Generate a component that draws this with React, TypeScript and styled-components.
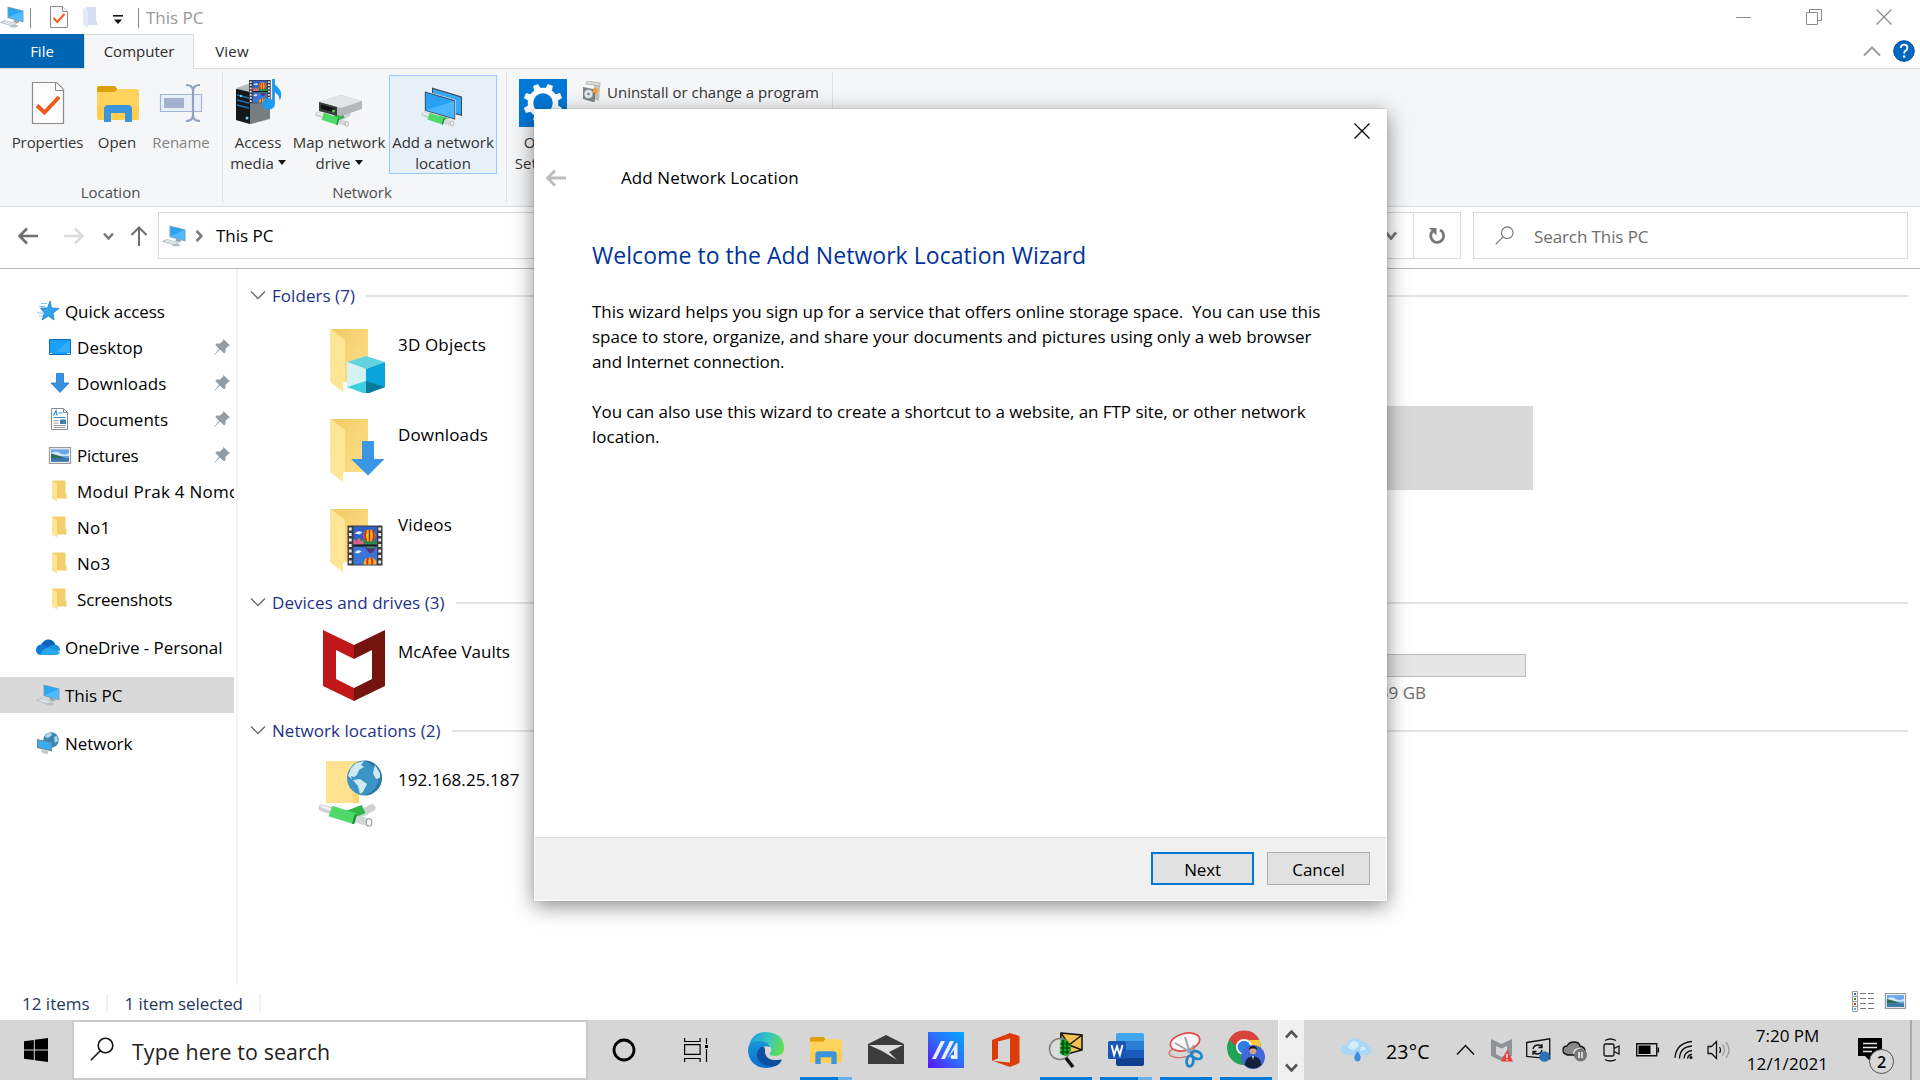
import React from "react";
import styled, { createGlobalStyle } from "styled-components";

const Global = createGlobalStyle`
  *, *::before, *::after { box-sizing: border-box; }
  html, body { margin: 0; padding: 0; background: #fff; overflow: hidden; }
  svg { display: block; flex: none; }
`;

const Screen = styled.div`
  position: relative;
  width: 1920px;
  height: 1080px;
  overflow: hidden;
  display: flex;
  flex-direction: column;
  background: #fff;
  color: #000;
  font-family: "Open Sans", "Noto Sans", sans-serif;
  font-size: 17px;
`;

const Txt = styled.span<{ $ls?: number; $size?: number; $color?: string }>`
  white-space: pre;
  letter-spacing: ${(p) => p.$ls ?? 0}px;
  font-size: ${(p) => (p.$size ? `${p.$size}px` : "inherit")};
  color: ${(p) => p.$color ?? "inherit"};
`;

/* ---------- title bar ---------- */
const TitleBar = styled.header`
  height: 34px;
  display: flex;
  align-items: center;
  flex: none;
`;
const QuickTools = styled.div`
  display: flex;
  align-items: center;
  flex: 1;
`;
const ToolSep = styled.i<{ $l: number; $r: number }>`
  width: 1px;
  height: 20px;
  margin: 2px ${(p) => p.$r}px 0 ${(p) => p.$l}px;
  background: #8a8a8a;
`;
const Gap = styled.i<{ $w: number }>`
  width: ${(p) => p.$w}px;
  flex: none;
`;
const ToolMenu = styled.div`
  padding-top: 6px;
`;
const Controls = styled.div`
  display: flex;
  padding-right: 1px;
`;
const ControlButton = styled.div`
  width: 70px;
  display: flex;
  justify-content: center;
`;

/* ---------- tabs ---------- */
const Tabs = styled.nav`
  height: 35px;
  display: flex;
  flex: none;
  font-size: 15px;
  border-bottom: 1px solid #dadbdc;
`;
const Tab = styled.div<{ $w: number; $kind?: "file" | "active" }>`
  width: ${(p) => p.$w}px;
  height: ${(p) => (p.$kind === "active" ? 35 : 34)}px;
  display: flex;
  align-items: center;
  justify-content: center;
  padding-bottom: ${(p) => (p.$kind === "active" ? 3 : 1)}px;
  color: ${(p) => (p.$kind === "file" ? "#fff" : "#2b2b2b")};
  background: ${(p) => (p.$kind === "file" ? "#0066b4" : p.$kind === "active" ? "#f5f6f7" : "transparent")};
  border: ${(p) => (p.$kind === "active" ? "1px solid #dadbdc" : "0")};
  border-bottom: 0;
`;
const TabTools = styled.div`
  margin-left: auto;
  display: flex;
  align-items: center;
  gap: 12px;
  padding-right: 5px;
`;

/* ---------- ribbon ---------- */
const Ribbon = styled.section`
  height: 138px;
  flex: none;
  display: flex;
  background: #f5f6f7;
  border-bottom: 1px solid #dadbdc;
  font-size: 15px;
`;
const Group = styled.div<{ $w: number; $pad: number }>`
  width: ${(p) => p.$w}px;
  padding: 6px 0 0 ${(p) => p.$pad}px;
  position: relative;
  display: flex;
  flex-direction: column;
  &::after {
    content: "";
    position: absolute;
    right: 0;
    top: 3px;
    bottom: 3px;
    width: 1px;
    background: #dfe0e2;
  }
`;
const GroupRow = styled.div`
  display: flex;
  height: 99px;
`;
const GroupName = styled.div<{ $shift?: number }>`
  height: 32px;
  display: flex;
  align-items: center;
  justify-content: center;
  padding-top: 3px;
  padding-right: ${(p) => p.$shift ?? 0}px;
  color: #4c4c4c;
`;
const BigButton = styled.div<{ $w: number; $on?: boolean; $dim?: boolean }>`
  width: ${(p) => p.$w}px;
  height: 99px;
  display: flex;
  flex-direction: column;
  align-items: center;
  color: ${(p) => (p.$dim ? "#838383" : "#333")};
  line-height: 21px;
  padding-top: ${(p) => (p.$on ? 3 : 4)}px;
  border: ${(p) => (p.$on ? "1px solid #99c9f7" : "0")};
  background: ${(p) => (p.$on ? "#e7eff8" : "transparent")};
  svg { margin-bottom: 5px; }
`;
const CaretLine = styled.div`
  display: flex;
  align-items: center;
  gap: 4px;
`;
const Caret = styled.i`
  border: 4px solid transparent;
  border-top: 5px solid #111;
  border-bottom: 0;
  margin-top: -3px;
`;
const SmallButton = styled.div`
  display: flex;
  align-items: center;
  height: 34px;
  gap: 6px;
  padding-left: 8px;
  color: #333;
`;

/* ---------- address ---------- */
const AddressRow = styled.section`
  height: 62px;
  flex: none;
  display: flex;
  padding: 5px 12px 9px 0;
  border-bottom: 1px solid #b9b9b9;
`;
const NavButtons = styled.div`
  width: 158px;
  display: flex;
  align-items: center;
  padding-left: 18px;
`;
const AddressBox = styled.div`
  width: 1303px;
  height: 47px;
  border: 1px solid #d9d9d9;
  display: flex;
  align-items: center;
`;
const Crumb = styled.div`
  flex: 1;
  display: flex;
  align-items: center;
  padding-left: 3px;
`;
const RefreshBox = styled.div`
  width: 47px;
  height: 45px;
  border-left: 1px solid #d9d9d9;
  display: flex;
  align-items: center;
  justify-content: center;
`;
const SearchBox = styled.div`
  margin-left: 12px;
  flex: 1;
  height: 47px;
  border: 1px solid #d9d9d9;
  display: flex;
  align-items: center;
  gap: 20px;
  padding-left: 21px;
  color: #6d6d6d;
  span { padding-top: 2px; }
`;

/* ---------- body ---------- */
const Body = styled.main`
  height: 716px;
  flex: none;
  display: flex;
`;
const Side = styled.aside`
  width: 238px;
  padding-top: 24px;
  border-right: 2px solid #f5f5f5;
  display: flex;
  flex-direction: column;
`;
const SideRow = styled.div<{ $sub?: boolean; $on?: boolean; $top?: number }>`
  width: 234px;
  height: 36px;
  flex: none;
  margin-top: ${(p) => p.$top ?? 0}px;
  padding-left: ${(p) => (p.$sub ? 48 : 36)}px;
  display: flex;
  align-items: center;
  gap: 5px;
  overflow: hidden;
  background: ${(p) => (p.$on ? "#d9d9d9" : "transparent")};
`;
const PinSlot = styled.div`
  margin-left: auto;
  padding-right: 4px;
`;
const Content = styled.div`
  flex: 1;
  padding: 10px 12px 0 12px;
`;
const Section = styled.div<{ $h: number }>`
  height: ${(p) => p.$h}px;
`;
const Head = styled.div`
  height: 34px;
  display: flex;
  align-items: center;
  color: #1e3287;
  svg { margin-right: 6px; margin-top: -3px; }
  span { padding-bottom: 2px; }
  &::after {
    content: "";
    height: 2px;
    flex: 1;
    margin-left: 11px;
    background: #e3e3e3;
  }
`;
const Tiles = styled.div`
  display: grid;
  grid-template-columns: repeat(3, 403px);
  grid-auto-rows: 84px;
  gap: 6px;
  padding: 3px 0 0 62px;
`;
const Tile = styled.div<{ $on?: boolean; $col?: number }>`
  display: flex;
  grid-column: ${(p) => p.$col ?? 1};
  background: ${(p) => (p.$on ? "#d9d9d9" : "transparent")};
  padding: 5px 0 0 6px;
  gap: 8px;
`;
const TileText = styled.div`
  line-height: 24px;
  padding-top: 12px;
`;
const Drive = styled.div`
  width: 310px;
  margin-left: 80px;
  padding-top: 26px;
  color: #6d6d6d;
`;
const DriveBar = styled.div`
  height: 23px;
  border: 1px solid #bcbcbc;
  background: #e6e6e6;
`;
const DriveInfo = styled.div`
  width: 210px;
  padding-top: 4px;
  text-align: right;
`;

/* ---------- status ---------- */
const Status = styled.footer`
  height: 35px;
  flex: none;
  display: flex;
  align-items: center;
  padding-left: 22px;
  color: #1e395b;
  span { padding-top: 1px; }
`;
const StatusSep = styled.i<{ $l: number; $r: number }>`
  width: 2px;
  height: 18px;
  margin-left: ${(p) => p.$l}px;
  margin-right: ${(p) => p.$r}px;
  background: #f1f1f1;
`;
const ViewIcons = styled.div`
  margin-left: auto;
  display: flex;
  align-items: center;
  gap: 10px;
  padding: 0 13px 3px 0;
`;

/* ---------- taskbar ---------- */
const Taskbar = styled.div`
  height: 60px;
  flex: none;
  display: flex;
  background: #d6d6d6;
`;
const StartButton = styled.div`
  width: 72px;
  display: flex;
  align-items: center;
  justify-content: center;
`;
const TaskSearch = styled.div`
  width: 516px;
  border: 2px solid #cacaca;
  background: #fff;
  display: flex;
  align-items: center;
  padding: 3px 0 0 16px;
  gap: 18px;
  color: #222;
  svg { margin-top: -5px; }
`;
const TaskItem = styled.div<{ $w?: number; $run?: "one" | "many"; $l?: number }>`
  width: ${(p) => p.$w ?? 60}px;
  margin-left: ${(p) => p.$l ?? 0}px;
  height: 60px;
  display: flex;
  align-items: center;
  justify-content: center;
  border-bottom: 3px solid transparent;
  padding-top: 3px;
  border-image: ${(p) =>
    p.$run === "one"
      ? "linear-gradient(90deg, transparent 7px, #0078d7 7px, #0078d7 53px, transparent 53px) 3"
      : p.$run === "many"
      ? "linear-gradient(90deg, transparent 7px, #0078d7 7px, #0078d7 41px, #69afe8 41px, #69afe8 53px, transparent 53px) 3"
      : "none"};
`;
const Scroller = styled.div`
  width: 26px;
  margin-left: 2px;
  border-left: 1px solid #fff;
  background: #f0f0f0;
  display: flex;
  flex-direction: column;
  align-items: center;
  justify-content: space-between;
  padding: 10px 0 8px;
`;
const Weather = styled.div`
  display: flex;
  align-items: center;
  width: 152px;
  padding-left: 37px;
  gap: 13px;
  span { padding-top: 2px; }
`;
const Tray = styled.div`
  display: flex;
  align-items: center;
  width: 276px;
`;
const Clock = styled.div`
  width: 111px;
  display: flex;
  flex-direction: column;
  align-items: center;
  line-height: 28px;
  padding-top: 2px;
`;
const Notice = styled.div`
  position: relative;
  width: 60px;
  margin-left: 9px;
  padding: 17px 0 0 6px;
  border-right: 2px solid #ababab;
  height: 60px;
`;
const NoticeCount = styled.div`
  position: absolute;
  left: 17px;
  top: 29px;
  width: 25px;
  height: 25px;
  border: 1px solid #555;
  border-radius: 50%;
  background: #d9d9d9;
  display: flex;
  align-items: center;
  justify-content: center;
  font-size: 16px;
  font-weight: 600;
`;

/* ---------- dialog ---------- */
const Dialog = styled.section`
  position: absolute;
  left: 534px;
  top: 109px;
  width: 853px;
  height: 792px;
  background: #fff;
  box-shadow: 0 5px 20px rgba(0, 0, 0, 0.46), 0 0 1px rgba(0, 0, 0, 0.3);
  display: flex;
  flex-direction: column;
`;
const DialogTop = styled.div`
  height: 44px;
  display: flex;
  align-items: center;
  justify-content: flex-end;
  padding-right: 17px;
`;
const DialogTitle = styled.div`
  height: 50px;
  display: flex;
  align-items: center;
  padding: 0 0 1px 12px;
  gap: 55px;
`;
const DialogBody = styled.div`
  flex: 1;
  padding: 34px 0 0 58px;
  line-height: 25px;
`;
const DialogHeading = styled.h1`
  margin: 0 0 26px;
  font-weight: 400;
  font-size: 23px;
  line-height: 36px;
  color: #003399;
`;
const Line = styled.div`
  height: 25px;
`;
const DialogFoot = styled.div`
  height: 63px;
  margin: 0 1px 1px;
  border-top: 1px solid #dfdfdf;
  background: #f0f0f0;
  display: flex;
  justify-content: flex-end;
  gap: 13px;
  padding: 14px 16px 0 0;
`;
const Button = styled.button<{ $primary?: boolean }>`
  width: 103px;
  height: 33px;
  padding: 1px 0 0;
  font-family: inherit;
  font-size: 17px;
  background: #e1e1e1;
  border: ${(p) => (p.$primary ? "2px solid #0078d7" : "1px solid #adadad")};
  color: #000;
  display: flex;
  align-items: center;
  justify-content: center;
`;

/* ---------- drawings ---------- */
const PcIcon = () => (
  <svg width="24" height="22" viewBox="0 0 24 22">
    <path d="M7.500.500 23.500 4.500v12l-16-4.500z" fill="#8aa0ad" />
    <path d="M8.300 1.600 22.600 5.100v10.200L8.300 11.300z" fill="#2aa5f5" />
    <path d="M8.300 11.300 22.600 5.100v10.200z" fill="#4fbaff" />
    <path d="m14 13.500 5 1.600-.4 2.200-5-1.400z" fill="#93a4ad" />
    <path d="m.5 16.500 4-2 12 3-4 2.600z" fill="#c9d2d7" stroke="#9fabb2" strokeWidth=".6" />
    <path d="m3 16.300 11 2.800M5 15.300l10 2.600" stroke="#fff" strokeWidth=".6" />
    <ellipse cx="14" cy="20" rx="4" ry="1.600" fill="#b7c1c7" />
  </svg>
);
const SheetCheck = () => (
  <svg width="18" height="22" viewBox="0 0 18 22">
    <path d="M.5.500h12l5 5v16H.500z" fill="#fcfcfc" stroke="#8c8c8c" />
    <path d="M12.500.500v5h5" fill="#fff" stroke="#8c8c8c" />
    <path d="m3.500 12 3.800 4L14.500 8" fill="none" stroke="#f15a1e" strokeWidth="2" />
  </svg>
);
const PaleFolder = () => (
  <svg width="14" height="21" viewBox="0 0 14 21">
    <path d="M3 0h10v14h1v4H3z" fill="#d3dfef" />
    <path d="m0 0 5 4v17l-5-3z" fill="#e2eaf5" />
  </svg>
);
const PropertiesIcon = () => (
  <svg width="48" height="48" viewBox="0 0 48 48">
    <g transform="translate(7.500 2.500)">
      <path d="M1 1h24l7 7v34H1z" fill="#fcfcfc" stroke="#8c8c8c" strokeWidth="1.200" />
      <path d="M24 1v8h8" fill="#fff" stroke="#8c8c8c" />
      <path d="m5.500 24 7.500 7L27.500 15.500" fill="none" stroke="#f15a1e" strokeWidth="4" />
    </g>
  </svg>
);
const ExplorerShape = () => (
  <g>
    <path d="M0 2q0-2 2-2h16l3 4-3 3H0z" fill="#e09f08" />
    <path d="M0 6h17l4-3h19q2 0 2 2v27q0 2-2 2H2q-2 0-2-2z" fill="#ffd35c" />
    <path d="M0 20v12q0 2 2 2h38q2 0 2-2V20z" fill="#ffcb45" opacity=".6" />
    <path d="M7 36V23q0-4 4-4h20q4 0 4 4v13h-7v-9H14v9z" fill="#3a95dd" />
  </g>
);
const RenameIcon = () => (
  <svg width="48" height="48" viewBox="0 0 48 48">
    <path d="M3.500 15.500h41v17h-41z" fill="#e9f0fa" stroke="#a3b5d4" strokeWidth="1.200" />
    <path d="M7 19h20v10H7z" fill="#a5b1cd" />
    <path d="M29 6q7 0 7 6v24q0 6-7 6M43 6q-7 0-7 6v24q0 6 7 6" fill="none" stroke="#92a3c2" strokeWidth="2.200" />
  </svg>
);
const Film = () => (
  <g>
    <path d="M0 0h35v40H0z" fill="#3c3c3c" />
    <path d="M6 1h23.500v18H6z" fill="#2f5fc8" />
    <path d="M6 21h23.500v18H6z" fill="#3a76d8" />
    <path d="M6 15q6-4 10-1t13.500 1v4H6z" fill="#2d8a4a" />
    <path d="M6 19v-6l3 3 2-4 3 4 2-2v5z" fill="#e0608e" />
    <path d="M7 8q4-4 8-1l-3 2zM7 27q4-4 7-1l-3 2z" fill="#dfe9f8" />
    <ellipse cx="22" cy="10" rx="6" ry="6" fill="#f5c518" />
    <path d="M19 5q-3 5 0 10M25 5q3 5 0 10" stroke="#d62b1f" strokeWidth="2" fill="none" />
    <path d="M22 4v12" stroke="#a3261c" strokeWidth="1.500" />
    <path d="M6 20h23.500" stroke="#222" strokeWidth="2" />
    <path d="M18 21h10q-1 5-5 7-4-2-5-7z" fill="#5b2d7e" />
    <path d="M19 22h8" stroke="#2ea84a" strokeWidth="1.500" />
    <path d="M16 39q0-7 6.500-7t6.500 7z" fill="#f5b518" />
    <path d="M20 39q-1-5 1-6.500M24.500 39q1-5-1-6.500" stroke="#d62b1f" strokeWidth="2" fill="none" />
    <path d="M2.800 2v36M32.200 2v36" stroke="#e8e8e8" strokeWidth="2.800" strokeDasharray="3 2.500" />
  </g>
);
const MediaIcon = () => (
  <svg width="48" height="48" viewBox="0 0 48 48">
    <path d="m2 10 12-4 22 2v32l-19 5-15-4z" fill="#8d9296" />
    <path d="m2 10 14 3v32L2 41z" fill="#15181b" />
    <path d="m16 13 20-5v31l-20 6z" fill="#777c80" />
    <path d="m2 9 12-4 22 3-20 5z" fill="#b9bdc0" />
    <path d="m3 16 12 3M3 21l12 3M3 26l12 3" stroke="#2270b5" strokeWidth="1.300" />
    <circle cx="7" cy="17" r="1.200" fill="#5bd6ff" />
    <circle cx="13" cy="39" r="1.500" fill="#5bd6ff" />
    <g transform="translate(15 1) scale(.62 .58)"><Film /></g>
    <path d="M39.500 0v24" stroke="#1a8fe3" strokeWidth="2.600" />
    <path d="M38.500 0q2 6 6 9 5 5 1 13 1-6-7-10z" fill="#1a9df0" />
    <ellipse cx="34.500" cy="25" rx="6.500" ry="5.500" fill="#1a9df0" />
  </svg>
);
const Pipe = () => (
  <g>
    <path d="m3 6 9 3M30 11l9-5" stroke="#cfd2d4" strokeWidth="5.500" strokeLinecap="round" />
    <path d="m3 5 8 3" stroke="#f1f2f2" strokeWidth="2" strokeLinecap="round" />
    <path d="m27 14 9 3" stroke="#d4d7d9" strokeWidth="6" strokeLinecap="round" />
    <path d="m18 13 15-6" stroke="#2fb548" strokeWidth="7" />
    <path d="m9 8.500 18 6" stroke="#4fd968" strokeWidth="8.500" />
    <path d="m27.500 11-2 7.500" stroke="#178a36" strokeWidth="1.500" />
    <ellipse cx="37" cy="17.300" rx="2" ry="2.900" fill="#fafafa" stroke="#999" strokeWidth=".8" />
  </g>
);
const DriveIcon = () => (
  <svg width="48" height="48" viewBox="0 0 48 48">
    <g transform="translate(0 30) scale(.86)"><Pipe /></g>
    <path d="m4 23 22-7 21 6v8L26 37 4 32z" fill="#b4b6b8" />
    <path d="m4 23 22-7 21 6-21 7z" fill="#e4e5e6" />
    <path d="m4 23 18 5v9L4 32z" fill="#3a3d40" />
    <path d="m6 25.500 14 4v4L6 30z" fill="#111" />
    <circle cx="18.500" cy="32" r="1.500" fill="#3de04c" />
  </svg>
);
const ScreensIcon = () => (
  <svg width="48" height="48" viewBox="0 0 48 48">
    <g transform="translate(2 30) scale(.84)"><Pipe /></g>
    <path d="m13 8.500 30 9V37l-30-8z" fill="#3d4a54" />
    <path d="m14 10 28 8.500v17L14 28z" fill="#35a9f5" />
    <path d="m5.500 12 31 9v20l-31-9z" fill="#3d4a54" stroke="#f5f6f7" strokeWidth=".6" />
    <path d="m6.800 13.800 28.500 8.200v17.300L6.800 31z" fill="#28a0f4" />
    <path d="m6.800 31 28.500-9v17.300z" fill="#49b6ff" />
  </svg>
);
const GearTile = () => (
  <svg width="48" height="48" viewBox="0 0 48 48">
    <path d="M0 0h48v48H0z" fill="#0078d7" />
    <circle cx="24" cy="24" r="12.500" fill="none" stroke="#fff" strokeWidth="5.500" />
    {[22.5, 67.5, 112.5, 157.5, 202.5, 247.5, 292.5, 337.5].map((a) => (
      <path key={a} d="m20.500 10 .8-5.500h5.400l.8 5.500z" fill="#fff" transform={`rotate(${a} 24 24)`} />
    ))}
  </svg>
);
const ProgramIcon = () => (
  <svg width="18" height="22" viewBox="0 0 18 22">
    <path d="m4 0 13 2v4l-1 14-5-2V4L3 3z" fill="#c3c3bd" />
    <path d="m4 0 13 2v3L3 3z" fill="#dcdcd8" stroke="#999" strokeWidth=".5" />
    <circle cx="12" cy="10" r="3" fill="#f2a03c" />
    <path d="m0 6 10 2v13L0 18z" fill="#7b8487" />
    <circle cx="5.500" cy="13" r="4.500" fill="#dfe8ea" stroke="#899" strokeWidth=".6" />
    <circle cx="5.500" cy="13" r="1.200" fill="#6a7a7a" />
    <path d="M11 12v9" stroke="#222" />
  </svg>
);
const arrowTurn = { left: undefined, right: "rotate(180 10 10)", up: "rotate(90 10 10)" };
const ArrowIcon = ({ dir, color, w = 2.6 }: { dir: "left" | "right" | "up"; color: string; w?: number }) => (
  <svg width="20" height="20" viewBox="0 0 20 20">
    <g transform={arrowTurn[dir]} fill="none" stroke={color} strokeWidth={w}>
      <path d="M1.500 10H20M9 2.500 1.500 10 9 17.500" />
    </g>
  </svg>
);
const chevronPath = {
  down: (w: number, h: number) => `M1 1.5 ${w / 2} ${h - 1.5} ${w - 1} 1.5`,
  up: (w: number, h: number) => `M1 ${h - 1.5} ${w / 2} 1.5 ${w - 1} ${h - 1.5}`,
  right: (w: number, h: number) => `M1.5 1 ${w - 1.5} ${h / 2} 1.5 ${h - 1}`,
};
const Chevron = ({ w, h, color, sw = 1.5, dir = "down" }: { w: number; h: number; color: string; sw?: number; dir?: "down" | "up" | "right" }) => (
  <svg width={w} height={h} viewBox={`0 0 ${w} ${h}`}>
    <path d={chevronPath[dir](w, h)} fill="none" stroke={color} strokeWidth={sw} />
  </svg>
);
const Glass = ({ s, color, sw }: { s: number; color: string; sw: number }) => (
  <svg width={s} height={s} viewBox="0 0 24 24">
    <circle cx="15.500" cy="8.500" r="7.300" fill="none" stroke={color} strokeWidth={sw} />
    <path d="M10.300 13.700.8 23.200" stroke={color} strokeWidth={sw} />
  </svg>
);
const Cross = ({ color }: { color: string }) => (
  <svg width="16" height="16" viewBox="0 0 16 16">
    <path d="m.5.500 15 15M15.500.500l-15 15" stroke={color} strokeWidth="1.200" />
  </svg>
);
const PinIcon = () => (
  <svg width="16" height="17" viewBox="0 0 16 17">
    <path d="m9.500 0 6.500 6.500-2 .8-2.500 2.600V13l-1.500 1.500-4-3.900L.5 16l-.3-.3 4.900-5.900L1.300 6 2.500 4.500H6L8.800 2z" fill="#929ca5" />
  </svg>
);
const StarIcon = () => (
  <svg width="24" height="20" viewBox="0 0 24 20">
    <path d="m14 0 1.500 7 7.500.5-6 4.500 1 7-5.500-4-6.500 4 2.500-7-4-5h7z" fill="#2fa2ea" stroke="#1c7fc4" strokeWidth=".8" />
    <path d="M5 2.500h6M3 5.500h6M1 12h7M3 15h4" stroke="#7cc7f4" strokeWidth="1" />
  </svg>
);
const DesktopIcon = () => (
  <svg width="24" height="18" viewBox="0 0 24 18">
    <path d="M1.500 1.500h21v15h-21z" fill="#1aa0fb" stroke="#0a6cbd" />
    <path d="M22 2v12H8z" fill="#44b4ff" opacity=".6" />
    <path d="M2 15.500h2M19 15.500h3" stroke="#fff" />
  </svg>
);
const DownIcon = () => (
  <svg width="24" height="20" viewBox="0 0 24 20">
    <path d="M8.500.500h7v9.500H21l-9 9.500L3 10h5.500z" fill="#3792e3" stroke="#2a78c2" strokeWidth=".8" />
  </svg>
);
const DocIcon = () => (
  <svg width="24" height="22" viewBox="0 0 24 22">
    <path d="M3.500.500h12l4 4v17h-16z" fill="#fff" stroke="#8a8a8a" />
    <path d="M15.500.500v4h4" fill="none" stroke="#8a8a8a" />
    <path d="m5.500 7.500 2.500-5 1 5M10.500 5h4M5.500 9.500h12" stroke="#2a8ad4" strokeWidth="1.200" fill="none" />
    <path d="M5.500 12.500h5M5.500 15h5M5.500 17.500h12M5.500 19.500h12" stroke="#9a9a9a" />
    <path d="M12 11.500h6v4.500h-6z" fill="#3f7fae" />
  </svg>
);
const PictureIcon = ({ w = 24, h = 17 }: { w?: number; h?: number }) => (
  <svg width={w} height={h} viewBox="0 0 24 17" preserveAspectRatio="none">
    <path d="M1.500.700h21v15.600h-21z" fill="#fff" stroke="#9b9b9b" strokeWidth="1.300" />
    <path d="M3 2.300h18v12.400H3z" fill="#6aa5ea" />
    <path d="M3 6q5-3 9 0t9 0v3H3z" fill="#cfe6fa" />
    <path d="M3 6.500Q10 8 17 11H3z" fill="#2f6a52" />
    <path d="M3 11h18v3.700H3z" fill="#3c76a5" />
  </svg>
);
const FolderIcon = () => (
  <svg width="24" height="22" viewBox="0 0 24 22">
    <path d="M5 .500h12.500v12.500l1 1V18.500H5z" fill="#f3cf6c" />
    <path d="m4 .500 5 3.500v17.500l-5-3z" fill="#ffe394" />
  </svg>
);
const CloudDrive = () => (
  <svg width="24" height="17" viewBox="0 0 24 17">
    <path d="M5 6Q8 0 13 .500q5 .500 6.500 5.500L12 12z" fill="#0a64b8" />
    <path d="M5.500 5.500Q8 5 12 8l-6 8Q0 16 0 11q0-5 5.500-5.500z" fill="#0a78d6" />
    <path d="M12 8q3-3 7-2.500 5 .800 5 6l-12 2z" fill="#1790e0" />
    <path d="M4 16q2-6 8-7.500L24 13q-1 3-4 3H5z" fill="#28a8ea" />
  </svg>
);
const NetIcon = () => (
  <svg width="24" height="23" viewBox="0 0 24 23">
    <circle cx="15" cy="8" r="7.800" fill="#3d86b4" />
    <path d="M9 4q3-4 6-3l1 2-4 3-3-1zM18 5l3-1 1 5-3 2z" fill="#b5d6e4" />
    <path d="m1 7 15 3.500v9L1 16z" fill="#6b8796" />
    <path d="m2 8.300 13 3V18.200L2 15z" fill="#35adf7" />
    <path d="m6 17.500 6 1.500v3l-5-.500-2-2z" fill="#c1cbd0" />
  </svg>
);
const BigFolder = ({ kind }: { kind: "cube" | "down" | "film" }) => (
  <svg width="72" height="72" viewBox="0 0 72 72">
    <defs>
      <linearGradient id="flap" x1="0" y1="0" x2="1" y2="1">
        <stop offset="0" stopColor="#f0cb66" />
        <stop offset="1" stopColor="#ffe08a" />
      </linearGradient>
    </defs>
    <path d="M12.500 8H50v53H12.500z" fill="url(#flap)" />
    <path d="m13 8 14 11v42l-2 1v9l-12-9z" fill="#ffe596" />
    {kind === "cube" && (
      <g>
        <path d="m29 41 19-6 19 6-19 7z" fill="#63d3e0" />
        <path d="m29 41 19 7v25l-19-7z" fill="#d2f2f3" />
        <path d="m48 48 19-7v25l-19 7z" fill="#0aa5dc" />
        <path d="m29 66 19-6v13z" fill="#3dd0dc" />
        <path d="m48 60 19 6-19 7z" fill="#087a9c" />
      </g>
    )}
    {kind === "down" && <path d="M44 30h12v18h10.500L50 64.500 33 48h11z" fill="#3b97e6" />}
    {kind === "film" && <g transform="translate(29.500 24.500)"><Film /></g>}
  </svg>
);
const McAfeeBig = () => (
  <svg width="72" height="78" viewBox="0 0 72 78">
    <path d="m5 2 31 15v14L18 22v29l18 9v13L5 58z" fill="#c01818" />
    <path d="M67 2 36 17v14l18-9v29l-18 9v13l31-15z" fill="#74140f" />
  </svg>
);
const NetFolder = () => (
  <svg width="72" height="76" viewBox="0 0 72 76">
    <path d="M8 5h30v42H8z" fill="#ffe190" />
    <path d="M35 5h6v42h-6z" fill="#fcd770" />
    <circle cx="46.500" cy="22" r="17.500" fill="#3c94c6" />
    <path d="M46.500 4.500a17.500 17.500 0 0 1 0 35q14-6 14-17t-14-18z" fill="#235f86" opacity=".55" />
    <path d="m33 12 5-5 8-2-3 4 3 2-5 3-2 5-3 2-3-1 1 3-4-3zM35 24l7-1 7 5-4 8-3 2-2-8zM57 9l5 8v5l-4 1-3-6z" fill="#cfe9f1" />
    <g transform="translate(0 44) scale(1.380 1.300)"><Pipe /></g>
  </svg>
);

const taskIcons = {
  ring: (
    <svg width="24" height="24" viewBox="0 0 24 24">
      <circle cx="12" cy="12" r="10" fill="none" stroke="#000" strokeWidth="2.800" />
    </svg>
  ),
  view: (
    <svg width="24" height="24" viewBox="0 0 24 24" fill="none" stroke="#000" strokeWidth="1.200">
      <path d="M.6 6.600h15.500v9.800H.6zM.6 0v3.500h15.500V0M.6 24v-3.500h15.500V24M22.500 0v6M22.500 11v13" />
      <path d="M21 7h3v3h-3z" fill="#000" stroke="none" />
    </svg>
  ),
  edge: (
    <svg width="36" height="36" viewBox="0 0 36 36">
      <defs>
        <linearGradient id="eg" x1="0" y1=".3" x2="1" y2=".5">
          <stop offset="0" stopColor="#1d9fe0" />
          <stop offset=".5" stopColor="#35c4c4" />
          <stop offset="1" stopColor="#62e04e" />
        </linearGradient>
        <linearGradient id="eb" x1="0" y1="0" x2="0" y2="1">
          <stop offset="0" stopColor="#1996d8" />
          <stop offset="1" stopColor="#0a6fd0" />
        </linearGradient>
      </defs>
      <path d="M1 14Q4 0 18 0q18 1 18 16 0 8-9 8-6 0-5-3 2-2 1-5-2-5-9-5-7-1-13 3z" fill="url(#eg)" />
      <path d="M0 18q0-9 11-9 9 0 11 6-9-3-9 7 1 13 14 12-4 2-9 2Q1 35 0 18z" fill="url(#eb)" />
      <path d="M13 15q-7 7-2 14 6 7 17 5 4-2 6-6-2-1-4 0-14 1-13-11-1-3-4-2z" fill="#0f4f9e" />
    </svg>
  ),
  files: (
    <svg width="32" height="27" viewBox="0 0 42 36" preserveAspectRatio="none"><ExplorerShape /></svg>
  ),
  mail: (
    <svg width="36" height="30" viewBox="0 0 36 30">
      <path d="M0 9 18 0l18 9v20H0z" fill="#3c3c3c" />
      <path d="M1 10h34L21 17l8 8-15-9z" fill="#dcdcdc" />
    </svg>
  ),
  asus: (
    <svg width="36" height="36" viewBox="0 0 36 36">
      <defs>
        <linearGradient id="as" x1="0" y1="1" x2="1" y2="0">
          <stop offset="0" stopColor="#5a14f5" />
          <stop offset=".5" stopColor="#2f6cfb" />
          <stop offset="1" stopColor="#00a8ff" />
        </linearGradient>
      </defs>
      <path d="M0 0h36v36H0z" fill="url(#as)" />
      <path d="M4 27 13 9h4L8 27zM13 27l9-18h4l-9 18zM19 27l9-16h1.500v16H26v-9z" fill="#e9eeff" />
      <circle cx="24.500" cy="25" r="2" fill="#fff" />
    </svg>
  ),
  office: (
    <svg width="28" height="34" viewBox="0 0 28 34">
      <path d="M0 7 18 0l9.500 3v27L18 34 1 28l17 1.500V5.500L6 8.500v17L0 28z" fill="#dc3c08" />
    </svg>
  ),
  finder: (
    <svg width="36" height="36" viewBox="0 0 36 36">
      <path d="m13 1 21 2v15l-18 5-4-2z" fill="#f2c14e" stroke="#111" strokeWidth="1.500" />
      <path d="m13 1 8 12L34 3M21 13l13 5" fill="none" stroke="#111" strokeWidth="1.500" />
      <circle cx="12" cy="17" r="10.500" fill="#d8dedb" fillOpacity=".85" stroke="#7d7d7d" strokeWidth="1.500" />
      <path d="M13 7q10 1 9.500 10-1 6-5 7l-5-2z" fill="#0ca81c" />
      <path d="M12 12h10M12 16h10M12 20h9M15 8v15M19 9v13" stroke="#033a08" strokeWidth="1.200" />
      <path d="m18 26 7 9" stroke="#111" strokeWidth="3.500" />
    </svg>
  ),
  word: (
    <svg width="36" height="34" viewBox="0 0 36 34">
      <path d="M8 2q0-2 2-2h24q2 0 2 2v6H8z" fill="#41a5ee" />
      <path d="M8 8h28v9H8z" fill="#2b7cd3" />
      <path d="M8 17h28v8H8z" fill="#185abd" />
      <path d="M8 25h28v6q0 2-2 2H10q-2 0-2-2z" fill="#103f91" />
      <rect x="0" y="8" width="18" height="18" rx="1.500" fill="#1a55b5" />
      <path d="m3.500 12 2.600 10L9 13.500 11.900 22l2.600-10" fill="none" stroke="#fff" strokeWidth="1.900" />
    </svg>
  ),
  snip: (
    <svg width="36" height="36" viewBox="0 0 36 36">
      <ellipse cx="14" cy="20" rx="13" ry="5.500" fill="none" stroke="#e07070" strokeWidth="1.300" transform="rotate(-6 14 20)" />
      <ellipse cx="17" cy="10" rx="15" ry="8.500" fill="#fbf6f6" stroke="#e34a4a" strokeWidth="1.700" transform="rotate(-14 17 10)" />
      <path d="m17 5 5 16M7 11l17 10M26 13l-6 8" stroke="#9aa4ab" strokeWidth="2" />
      <ellipse cx="28.500" cy="23" rx="5.500" ry="3.500" transform="rotate(25 28.500 23)" fill="none" stroke="#1f86cf" strokeWidth="2.800" />
      <ellipse cx="22" cy="29" rx="3.300" ry="5.500" transform="rotate(8 22 29)" fill="none" stroke="#1f86cf" strokeWidth="2.800" />
    </svg>
  ),
  chrome: (
    <svg width="40" height="40" viewBox="0 0 40 40">
      <circle cx="18" cy="18" r="17" fill="#1fa255" />
      <path d="M3 10A17 17 0 0 1 33.500 10H18q-6 1-7.500 6z" fill="#d8443b" />
      <path d="M33.500 10Q37 20 30 30L18 35l8-17-3-8z" fill="#fcc934" />
      <circle cx="18" cy="17" r="8" fill="#fff" />
      <circle cx="18" cy="17" r="6.300" fill="#2f7de9" />
      <circle cx="27" cy="27" r="12" fill="#4268d8" />
      <path d="M18.500 35q1-8 8.500-9 8 1 8.500 9-8 7-17 0z" fill="#14203a" />
      <circle cx="27" cy="21" r="3.300" fill="#d3a48b" />
      <path d="M23 20q0-4 4-4t4 4l-2-1.500h-4z" fill="#1d1512" />
      <path d="m26 26 1 4 1-4z" fill="#d5dcea" />
    </svg>
  ),
};

const places: { name: string; icon: React.ReactNode; pin?: boolean; ls?: number }[] = [
  { name: "Desktop", icon: <DesktopIcon />, pin: true, ls: 0.06 },
  { name: "Downloads", icon: <DownIcon />, pin: true, ls: 0.08 },
  { name: "Documents", icon: <DocIcon />, pin: true },
  { name: "Pictures", icon: <PictureIcon />, pin: true, ls: -0.3 },
  { name: "Modul Prak 4 Nomor", icon: <FolderIcon />, ls: 0.25 },
  { name: "No1", icon: <FolderIcon />, ls: 0.2 },
  { name: "No3", icon: <FolderIcon />, ls: 0.2 },
  { name: "Screenshots", icon: <FolderIcon />, ls: -0.15 },
];

export default function App() {
  return (
    <Screen>
      <Global />
      <TitleBar>
        <QuickTools>
          <PcIcon />
          <ToolSep $l={6} $r={19} />
          <SheetCheck />
          <Gap $w={15} />
          <PaleFolder />
          <Gap $w={16} />
          <ToolMenu>
            <svg width="10" height="10" viewBox="0 0 10 10">
              <path d="M0 .800h10" stroke="#111" strokeWidth="1.600" />
              <path d="M1 4.500h8L5 9z" fill="#111" />
            </svg>
          </ToolMenu>
          <ToolSep $l={15} $r={7} />
          <Txt $color="#999">This PC</Txt>
        </QuickTools>
        <Controls>
          <ControlButton>
            <svg width="16" height="16"><path d="M0 8.500h15" stroke="#8a8a8a" /></svg>
          </ControlButton>
          <ControlButton>
            <svg width="16" height="16" fill="none" stroke="#8a8a8a"><path d="M.5 3.500h11v12H.500zM3.500 3.500v-3h12v11h-4" /></svg>
          </ControlButton>
          <ControlButton><Cross color="#8a8a8a" /></ControlButton>
        </Controls>
      </TitleBar>
      <Tabs>
        <Tab $w={84} $kind="file"><Txt>File</Txt></Tab>
        <Tab $w={110} $kind="active"><Txt>Computer</Txt></Tab>
        <Tab $w={76}><Txt $ls={0.2}>View</Txt></Tab>
        <TabTools>
          <Chevron w={18} h={11} color="#9b9b9b" sw={2} dir="up" />
          <svg width="22" height="22" viewBox="0 0 22 22">
            <circle cx="11" cy="11" r="10.300" fill="#0067c5" stroke="#0b4a86" />
            <path d="M7.800 8q0-3.300 3.300-3.300t3.300 3q0 1.800-1.600 2.800-1.700 1-1.700 3" fill="none" stroke="#fff" strokeWidth="1.800" />
            <circle cx="11.100" cy="16.500" r="1.200" fill="#fff" />
          </svg>
        </TabTools>
      </Tabs>
      <Ribbon>
        <Group $w={223} $pad={8}>
          <GroupRow>
            <BigButton $w={79}><PropertiesIcon /><Txt $ls={-0.1}>Properties</Txt></BigButton>
            <BigButton $w={60}>
              <svg width="48" height="48" viewBox="0 0 48 48"><g transform="translate(4 7)"><ExplorerShape /></g></svg>
              <Txt>Open</Txt>
            </BigButton>
            <BigButton $w={68} $dim><RenameIcon /><Txt>Rename</Txt></BigButton>
          </GroupRow>
          <GroupName $shift={10}><Txt>Location</Txt></GroupName>
        </Group>
        <Group $w={284} $pad={4}>
          <GroupRow>
            <BigButton $w={62}>
              <MediaIcon /><Txt>Access</Txt>
              <CaretLine><Txt>media</Txt><Caret /></CaretLine>
            </BigButton>
            <BigButton $w={100}>
              <DriveIcon /><Txt>Map network</Txt>
              <CaretLine><Txt>drive</Txt><Caret /></CaretLine>
            </BigButton>
            <BigButton $w={108} $on><ScreensIcon /><Txt>Add a network</Txt><Txt>location</Txt></BigButton>
          </GroupRow>
          <GroupName $shift={10}><Txt>Network</Txt></GroupName>
        </Group>
        <Group $w={326} $pad={4}>
          <GroupRow>
            <BigButton $w={64}><GearTile /><Txt>Open</Txt><Txt $ls={0.1}>Settings</Txt></BigButton>
            <SmallButton><ProgramIcon /><Txt>Uninstall or change a program</Txt></SmallButton>
          </GroupRow>
        </Group>
      </Ribbon>
      <AddressRow>
        <NavButtons>
          <ArrowIcon dir="left" color="#6e6e6e" /><Gap $w={26} />
          <ArrowIcon dir="right" color="#dcdcdc" /><Gap $w={19} />
          <Chevron w={11} h={8} color="#7a7a7a" sw={2.6} /><Gap $w={15} />
          <ArrowIcon dir="up" color="#6e6e6e" w={2} />
        </NavButtons>
        <AddressBox>
          <Crumb>
            <PcIcon /><Gap $w={9} />
            <Chevron w={8} h={12} color="#7a7a7a" sw={2.6} dir="right" /><Gap $w={13} />
            <Txt>This PC</Txt>
          </Crumb>
          <Chevron w={12} h={9} color="#7a7a7a" sw={2.8} /><Gap $w={16} />
          <RefreshBox>
            <svg width="18" height="18" viewBox="0 0 18 18">
              <path d="M5.500 3.500A6.500 6.500 0 1 0 12 3" fill="none" stroke="#777" strokeWidth="2.800" />
              <path d="M1 1h7.500v7.500z" fill="#777" />
            </svg>
          </RefreshBox>
        </AddressBox>
        <SearchBox><Glass s={19} color="#777" sw={1.5} /><Txt $ls={-0.1}>Search This PC</Txt></SearchBox>
      </AddressRow>
      <Body>
        <Side>
          <SideRow><StarIcon /><Txt $ls={-0.1}>Quick access</Txt></SideRow>
          {places.map((p) => (
            <SideRow key={p.name} $sub>
              {p.icon}
              <Txt $ls={p.ls}>{p.name}</Txt>
              {p.pin && <PinSlot><PinIcon /></PinSlot>}
            </SideRow>
          ))}
          <SideRow $top={12}><CloudDrive /><Txt $ls={-0.05}>OneDrive - Personal</Txt></SideRow>
          <SideRow $top={12} $on><PcIcon /><Txt>This PC</Txt></SideRow>
          <SideRow $top={12}><NetIcon /><Txt $ls={-0.05}>Network</Txt></SideRow>
        </Side>
        <Content>
          <Section $h={307}>
            <Head><Chevron w={16} h={10} color="#6e6e6e" /><Txt $ls={0.05}>Folders (7)</Txt></Head>
            <Tiles>
              <Tile><BigFolder kind="cube" /><TileText><Txt $ls={0.17}>3D Objects</Txt></TileText></Tile>
              <Tile><BigFolder kind="down" /><TileText><Txt $ls={0.15}>Downloads</Txt></TileText></Tile>
              <Tile $on $col={3} />
              <Tile><BigFolder kind="film" /><TileText><Txt $ls={0.22}>Videos</Txt></TileText></Tile>
            </Tiles>
          </Section>
          <Section $h={128}>
            <Head><Chevron w={16} h={10} color="#6e6e6e" /><Txt $ls={0.05}>Devices and drives (3)</Txt></Head>
            <Tiles>
              <Tile><McAfeeBig /><TileText><Txt>McAfee Vaults</Txt></TileText></Tile>
              <Tile $col={3}><Drive><DriveBar /><DriveInfo><Txt>39 GB</Txt></DriveInfo></Drive></Tile>
            </Tiles>
          </Section>
          <Section $h={128}>
            <Head><Chevron w={16} h={10} color="#6e6e6e" /><Txt $ls={0.05}>Network locations (2)</Txt></Head>
            <Tiles>
              <Tile><NetFolder /><TileText><Txt $ls={0.08}>192.168.25.187</Txt></TileText></Tile>
            </Tiles>
          </Section>
        </Content>
      </Body>
      <Status>
        <Txt>12 items</Txt><StatusSep $l={16} $r={17} />
        <Txt $ls={-0.1}>1 item selected</Txt><StatusSep $l={16} $r={0} />
        <ViewIcons>
          <svg width="22" height="21" viewBox="0 0 22 21">
            <path d="M.5.500h5v20h-5zM.500 5.500h5M.500 10.500h5M.500 15.500h5" fill="#fff" stroke="#9a9a9a" />
            <path d="M8 2.500h6M16 2.500h6M8 7.500h6M16 7.500h6M8 12.500h6M16 12.500h6M8 17.500h6M16 17.500h6" stroke="#777" />
            <path d="M2 2h2v2H2z" fill="#2a6fc0" />
            <path d="M2 7h2v2H2z" fill="#4a8a2a" />
            <path d="M2 12h2v2H2z" fill="#c03a2a" />
            <path d="M2 17h2v2H2z" fill="#6fa0d0" />
          </svg>
          <PictureIcon w={23} h={16} />
        </ViewIcons>
      </Status>
      <Taskbar>
        <StartButton>
          <svg width="24" height="24" viewBox="0 0 24 24">
            <path d="m0 3.300 9.800-1.400v9.600H0zM10.800 1.700 24 0v11.500H10.800zM0 12.500h9.800v9.600L0 20.700zM10.800 12.500H24V24l-13.200-1.800z" />
          </svg>
        </StartButton>
        <TaskSearch><Glass s={24} color="#111" sw={1.6} /><Txt $size={21.3} $ls={0.12}>Type here to search</Txt></TaskSearch>
        <TaskItem $w={72}>{taskIcons.ring}</TaskItem>
        <TaskItem $w={72}>{taskIcons.view}</TaskItem>
        <TaskItem $l={4}>{taskIcons.edge}</TaskItem>
        <TaskItem $run="many">{taskIcons.files}</TaskItem>
        <TaskItem>{taskIcons.mail}</TaskItem>
        <TaskItem>{taskIcons.asus}</TaskItem>
        <TaskItem>{taskIcons.office}</TaskItem>
        <TaskItem $run="one">{taskIcons.finder}</TaskItem>
        <TaskItem $run="many">{taskIcons.word}</TaskItem>
        <TaskItem $run="one">{taskIcons.snip}</TaskItem>
        <TaskItem $run="one">{taskIcons.chrome}</TaskItem>
        <Scroller>
          <Chevron w={13} h={9} color="#555" sw={2.6} dir="up" />
          <Chevron w={13} h={9} color="#555" sw={2.6} />
        </Scroller>
        <Weather>
          <svg width="32" height="24" viewBox="0 0 32 24">
            <path d="M6 17q-6 0-6-5t6-5q1-6 7-7 6 0 7 4 6-1 7 4 4 1 4 4 0 5-5 5z" fill="#a9d8f7" />
            <path d="M7 10q2-8 7-7 4 1 4 5l-5 4zM20 9q4-1 5 2l-6 2z" fill="#d3edfd" />
            <path d="M16.500 13q4 5 3 8-1 2.500-3 2.500T13.500 21q-1-3 3-8z" fill="#3d8fe6" />
          </svg>
          <Txt $size={19.5} $ls={0.2}>23°C</Txt>
        </Weather>
        <Tray>
          <Chevron w={19} h={12} color="#111" dir="up" /><Gap $w={15} />
          <svg width="24" height="24" viewBox="0 0 24 24">
            <path d="m1 1 10.500 5L22 1v17l-10.500 5L1 18z" fill="#8f9296" />
            <path d="m6 8 5.500 2.500L17 8v8l-5.500 3L6 16z" fill="#d6d6d6" />
            <path d="m17 12 6 11.500H11z" fill="#ee3a32" />
            <path d="M17 16v4M17 21v1.500" stroke="#fff" strokeWidth="1.400" />
          </svg>
          <Gap $w={12} />
          <svg width="25" height="24" viewBox="0 0 25 24" fill="none" stroke="#111" strokeWidth="1.300">
            <path d="M.7 4.500 23.700.800v20L.700 18.500z" />
            <path d="M7 11q1-4 5-4 3 0 4 2M16 6v3.500h-3.500M16 12q-1 4-5 4-2 0-4-2M7 17v-3.500h3.500" />
            <circle cx="18.500" cy="18.500" r="5.300" fill="#2a72b9" stroke="none" />
          </svg>
          <Gap $w={11} />
          <svg width="26" height="24" viewBox="0 0 26 24">
            <path d="M4 16q-3 0-3-4t4-4q2-4 7-4t6 4q5 1 5 5v4H5z" fill="#888" stroke="#111" strokeWidth="1.300" />
            <path d="M11 16q0-6 6-6l5 1.500V17z" fill="#e5e5e5" />
            <circle cx="18.500" cy="17" r="6.500" fill="#767676" />
            <path d="M17 14v6M20 14v6" stroke="#fff" strokeWidth="1.400" />
          </svg>
          <Gap $w={15} />
          <svg width="18" height="24" viewBox="0 0 18 24" fill="none" stroke="#111" strokeWidth="1.300">
            <path d="M1 7.500q0-1.500 1.500-1.500h7q1.500 0 1.500 1.500v9q0 1.500-1.500 1.500h-7Q1 18 1 16.500zM11 10.500l5-2.500v8l-5-2.500M2 2.500q5-3 11 0M2 21.500q5 3 11 0" />
          </svg>
          <Gap $w={15} />
          <svg width="24" height="14" viewBox="0 0 24 14">
            <path d="M.7.700h20v12H.700z" fill="none" stroke="#111" strokeWidth="1.400" />
            <path d="M2.500 2.500h12v8.500h-12z" />
            <path d="M22.300 4.500v5" stroke="#111" strokeWidth="1.600" />
          </svg>
          <Gap $w={14} />
          <svg width="20" height="20" viewBox="0 0 20 20" fill="none" stroke="#111" strokeWidth="1.300">
            <path d="M1 18Q2 3 18 1.500M5.500 18.500Q6 7 18 6M10 18.500q.500-7 8-8M13.500 18.500q1-4 4.500-4" />
            <circle cx="17" cy="17.500" r="1.600" fill="#111" stroke="none" />
          </svg>
          <Gap $w={13} />
          <svg width="24" height="20" viewBox="0 0 24 20" fill="none" stroke="#111" strokeWidth="1.300">
            <path d="M1 6.500h3.500l5-5v17l-5-5H1zM12.500 7q2 3 0 6" />
            <path d="M15.500 4.500q4 5.500 0 11M19 2q6 8 0 16" stroke="#999" />
          </svg>
        </Tray>
        <Clock><Txt>7:20 PM</Txt><Txt $ls={0.1}>12/1/2021</Txt></Clock>
        <Notice>
          <svg width="26" height="26" viewBox="0 0 26 26">
            <path d="M0 1h24v18H12v5l-5-5H0z" />
            <path d="M5 6.500h14M5 10.500h14M5 14.500h9" stroke="#e5e5e5" strokeWidth="1.400" />
          </svg>
          <NoticeCount>2</NoticeCount>
        </Notice>
      </Taskbar>

      <Dialog>
        <DialogTop><Cross color="#000" /></DialogTop>
        <DialogTitle><ArrowIcon dir="left" color="#bdbdbd" w={3} /><Txt $ls={0.1}>Add Network Location</Txt></DialogTitle>
        <DialogBody>
          <DialogHeading><Txt $ls={0.05}>Welcome to the Add Network Location Wizard</Txt></DialogHeading>
          <Line><Txt>This wizard helps you sign up for a service that offers online storage space.  You can use this</Txt></Line>
          <Line><Txt>space to store, organize, and share your documents and pictures using only a web browser</Txt></Line>
          <Line><Txt $ls={-0.12}>and Internet connection.</Txt></Line>
          <Line />
          <Line><Txt $ls={-0.05}>You can also use this wizard to create a shortcut to a website, an FTP site, or other network</Txt></Line>
          <Line><Txt>location.</Txt></Line>
        </DialogBody>
        <DialogFoot>
          <Button $primary><Txt $ls={-0.2}>Next</Txt></Button>
          <Button><Txt>Cancel</Txt></Button>
        </DialogFoot>
      </Dialog>
    </Screen>
  );
}
